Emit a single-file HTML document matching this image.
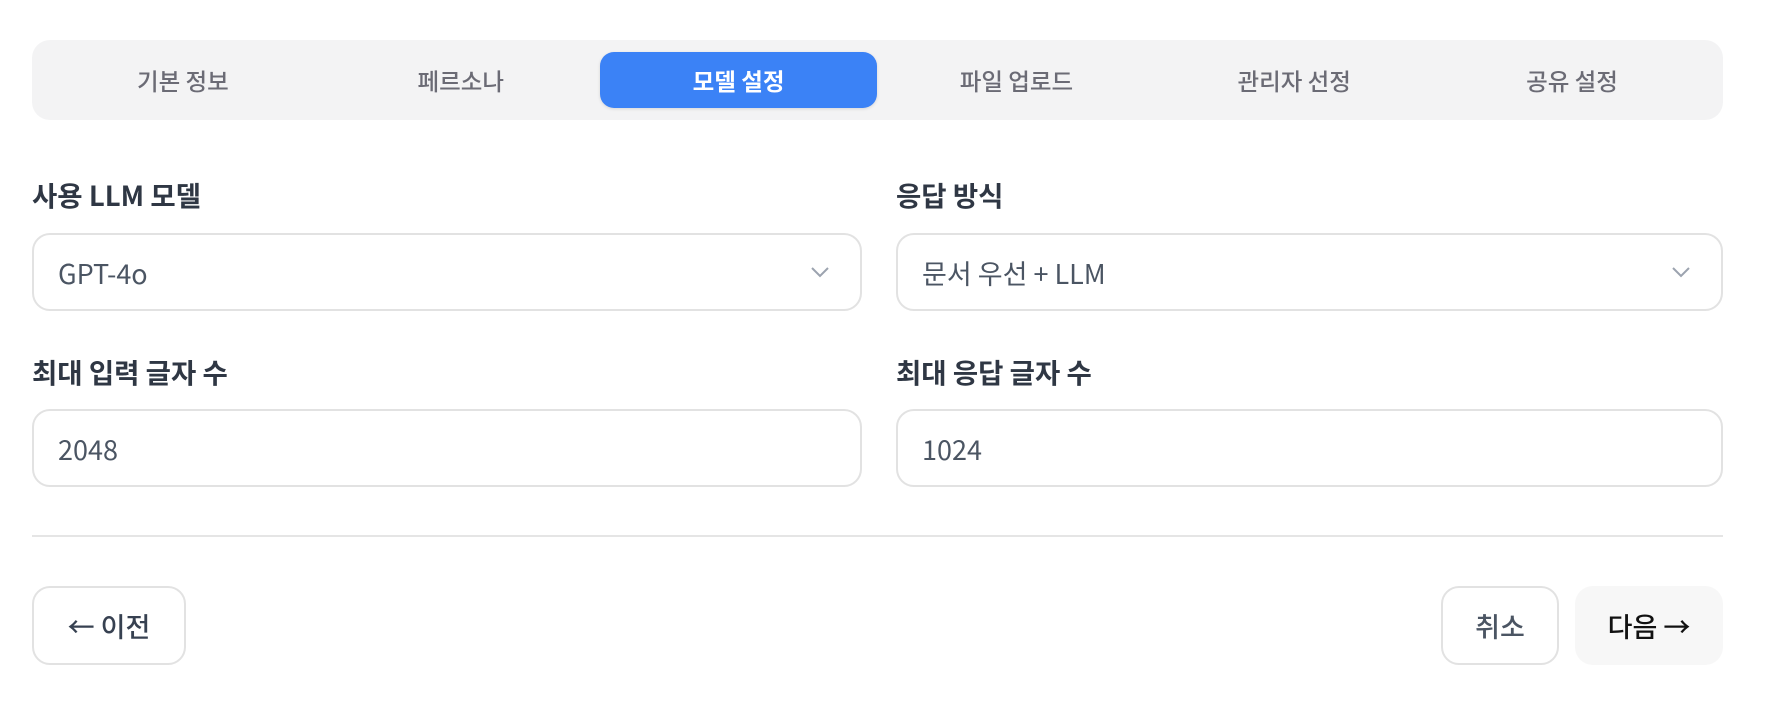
<!DOCTYPE html>
<html><head><meta charset="utf-8"><style>
*{box-sizing:border-box;margin:0;padding:0}
body{width:1772px;height:708px;background:#fff;font-family:"Noto Sans CJK KR","Liberation Sans",sans-serif;position:relative;overflow:hidden}
.tabs{position:absolute;left:32px;top:40px;width:1691px;height:80px;background:#f3f3f4;border-radius:18px;padding:12px;display:flex}
.tab{flex:1;display:flex;align-items:center;justify-content:center;font-size:23.5px;color:#6b6b75;font-weight:500;border-radius:14px}
.tab.on{background:#3b82f6;color:#fff;font-weight:700;box-shadow:0 1px 3px rgba(0,0,0,.12)}
.lbl{position:absolute;font-size:27.5px;font-weight:600;color:#2f3744;line-height:1.2}
.inp{position:absolute;height:78px;border:2px solid #e2e2e2;border-radius:18px;font-size:27px;color:#4b5563;display:flex;align-items:center;padding-left:24px}
.chev{position:absolute;right:30px;top:30px}
.div{position:absolute;left:32px;top:535px;width:1691px;height:2px;background:#e5e5e5}
.btn{position:absolute;top:586px;height:79px;border-radius:18px;display:flex;align-items:center;justify-content:center;font-size:27px;font-weight:500}
</style></head><body>
<div class="tabs">
<div class="tab">기본 정보</div><div class="tab">페르소나</div><div class="tab on">모델 설정</div><div class="tab">파일 업로드</div><div class="tab">관리자 선정</div><div class="tab">공유 설정</div>
</div>
<div class="lbl" style="left:32px;top:178px">사용 LLM 모델</div>
<div class="lbl" style="left:896px;top:178px">응답 방식</div>
<div class="inp" style="left:32px;top:233px;width:830px">GPT-4o<svg class="chev" width="20" height="14" viewBox="0 0 20 14"><path d="M2 3l8 8 8-8" fill="none" stroke="#9ca3af" stroke-width="2"/></svg></div>
<div class="inp" style="left:896px;top:233px;width:827px">문서 우선 + LLM<svg class="chev" width="20" height="14" viewBox="0 0 20 14"><path d="M2 3l8 8 8-8" fill="none" stroke="#9ca3af" stroke-width="2"/></svg></div>
<div class="lbl" style="left:32px;top:355px">최대 입력 글자 수</div>
<div class="lbl" style="left:896px;top:355px">최대 응답 글자 수</div>
<div class="inp" style="left:32px;top:409px;width:830px">2048</div>
<div class="inp" style="left:896px;top:409px;width:827px">1024</div>
<div class="div"></div>
<div class="btn" style="left:32px;width:154px;border:2px solid #e2e2e2;color:#374151">← 이전</div>
<div class="btn" style="left:1441px;width:118px;border:2px solid #e2e2e2;color:#4b5563">취소</div>
<div class="btn" style="left:1575px;width:148px;background:#f7f7f7;color:#111">다음 →</div>
</body></html>
